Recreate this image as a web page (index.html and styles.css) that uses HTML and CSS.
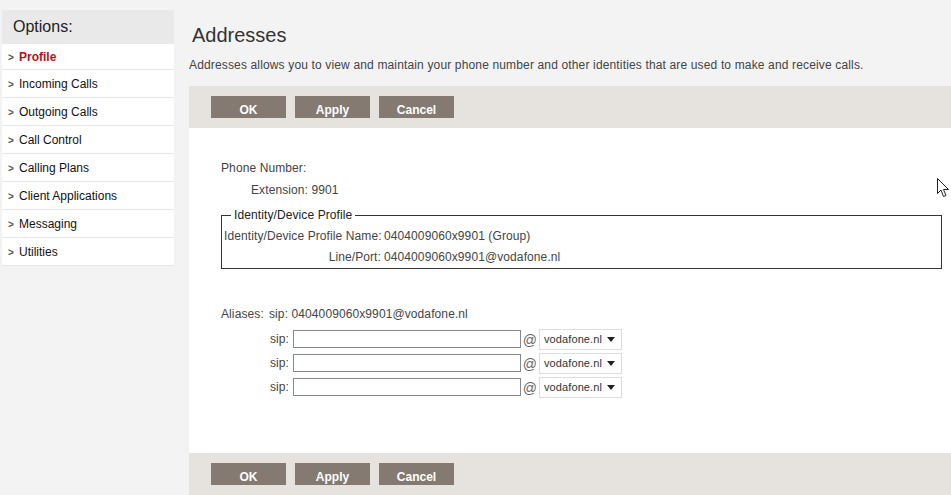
FILE: index.html
```html
<!DOCTYPE html>
<html lang="en">
  <head>
    <meta charset="UTF-8" />
    <meta name="viewport" content="width=device-width, initial-scale=1.0" />
    <title>Addresses</title>
    <link rel="stylesheet" href="styles.css">
  </head>
  <body>
    <div class="page">
      <div class="sidebar">
        <div class="sidebar-head">Options:</div>
        <a class="nav-item active" href="#"><span class="chev">&gt;</span>Profile</a>
        <a class="nav-item" href="#"><span class="chev">&gt;</span>Incoming Calls</a>
        <a class="nav-item" href="#"><span class="chev">&gt;</span>Outgoing Calls</a>
        <a class="nav-item" href="#"><span class="chev">&gt;</span>Call Control</a>
        <a class="nav-item" href="#"><span class="chev">&gt;</span>Calling Plans</a>
        <a class="nav-item" href="#"><span class="chev">&gt;</span>Client Applications</a>
        <a class="nav-item" href="#"><span class="chev">&gt;</span>Messaging</a>
        <a class="nav-item" href="#"><span class="chev">&gt;</span>Utilities</a>
      </div>

      <div class="main">
        <h1>Addresses</h1>
        <p class="intro">Addresses allows you to view and maintain your phone number and other identities that are used to make and receive calls.</p>

        <div class="button-bar">
          <button class="btn">OK</button>
          <button class="btn">Apply</button>
          <button class="btn">Cancel</button>
        </div>

        <div class="content">
          <div class="line">Phone Number:</div>
          <div class="line indent">Extension: 9901</div>

          <fieldset class="identity">
            <legend>Identity/Device Profile</legend>
            <div class="id-row">
              <span class="id-label">Identity/Device Profile Name:</span>
              <span>0404009060x9901 (Group)</span>
            </div>
            <div class="id-row">
              <span class="id-label">Line/Port:</span>
              <span>0404009060x9901@vodafone.nl</span>
            </div>
          </fieldset>

          <div class="aliases">
            <div class="alias-row">
              <span class="alias-title">Aliases:</span>
              <span>sip: 0404009060x9901@vodafone.nl</span>
            </div>
            <div class="alias-row">
              <span class="sip">sip:</span>
              <input type="text" class="sip-input" />
              <span class="at">@</span>
              <div class="select"><span>vodafone.nl</span><svg width="8" height="5" viewBox="0 0 8 5"><path d="M0 0h8L4 5z" fill="#222"/></svg></div>
            </div>
            <div class="alias-row">
              <span class="sip">sip:</span>
              <input type="text" class="sip-input" />
              <span class="at">@</span>
              <div class="select"><span>vodafone.nl</span><svg width="8" height="5" viewBox="0 0 8 5"><path d="M0 0h8L4 5z" fill="#222"/></svg></div>
            </div>
            <div class="alias-row">
              <span class="sip">sip:</span>
              <input type="text" class="sip-input" />
              <span class="at">@</span>
              <div class="select"><span>vodafone.nl</span><svg width="8" height="5" viewBox="0 0 8 5"><path d="M0 0h8L4 5z" fill="#222"/></svg></div>
            </div>
          </div>
        </div>

        <div class="button-bar">
          <button class="btn">OK</button>
          <button class="btn">Apply</button>
          <button class="btn">Cancel</button>
        </div>
      </div>
    </div>

    <!-- mouse pointer left in the screenshot -->
    <svg class="cursor" width="13" height="20" viewBox="0 0 13 20">
      <path d="M0.5 0.5 L0.5 15.5 L4 12 L6.5 18.5 L9 17.5 L6.5 11.5 L11.5 11.5 Z" fill="#fff" stroke="#222" stroke-width="1" stroke-linejoin="round"/>
    </svg>
  </body>
</html>
```

FILE: styles.css
```css
body {
  margin: 0;
  font-family: "Liberation Sans", Arial, sans-serif;
  font-size: 12px;
  background-color: #f3f3f4;
  color: #444;
  overflow: hidden;
}
.page {
  display: flex;
  align-items: flex-start;
}
.sidebar {
  width: 172px;
  margin: 10px 0 0 2px;
  background-color: #fff;
}
.sidebar-head {
  height: 34px;
  line-height: 34px;
  padding-left: 11px;
  font-size: 16px;
  color: #222;
  background-color: #e9e9e9;
}
.nav-item {
  display: block;
  height: 27px;
  line-height: 28px;
  border-bottom: 1px solid #e6e6e6;
  color: #111;
  text-decoration: none;
  font-size: 12px;
}
.nav-item.active {
  height: 25px;
  line-height: 27px;
  color: #b3121d;
  font-weight: bold;
}
.chev {
  display: inline-block;
  width: 17px;
  padding-left: 6px;
  box-sizing: border-box;
  color: #555;
  font-weight: bold;
  font-size: 10px;
}
.main {
  flex: 1;
  margin-left: 15px;
}
h1 {
  margin: 23px 0 0 3px;
  font-size: 20px;
  font-weight: normal;
  line-height: 24px;
  color: #333;
}
.intro {
  margin: 10px 0 13px 0;
  line-height: 16px;
  letter-spacing: 0.15px;
  color: #444;
}
.button-bar {
  display: flex;
  gap: 9px;
  height: 42px;
  padding: 10px 22px;
  box-sizing: border-box;
  background-color: #e6e2dd;
}
.btn {
  width: 75px;
  height: 22px;
  padding: 6px 0 0 0;
  border: none;
  background-color: #857a72;
  color: #fff;
  font-family: "Liberation Sans", Arial, sans-serif;
  font-size: 12px;
  font-weight: bold;
  line-height: 16px;
}
.content {
  height: 325px;
  box-sizing: border-box;
  padding: 32px 9px 0 32px;
  background-color: #fff;
  letter-spacing: 0.1px;
}
.line {
  height: 22px;
  line-height: 16px;
}
.indent {
  padding-left: 30px;
}
.identity {
  margin: 4px 0 0 0;
  padding: 6px 0 3px 2px;
  border: 1px solid #333;
}
.identity legend {
  padding: 0 3px;
  margin-left: 7px;
  color: #222;
}
.id-row {
  display: flex;
  gap: 3px;
  height: 21px;
  line-height: 16px;
  white-space: nowrap;
}
.id-row:last-child {
  height: 16px;
}
.id-label {
  width: 157px;
  text-align: right;
}
.aliases {
  margin-top: 34px;
}
.alias-row {
  display: flex;
  align-items: center;
  height: 24px;
}
.alias-row:first-child {
  height: 22px;
  margin-bottom: 2px;
}
.alias-title {
  width: 48px;
}
.sip {
  width: 72px;
  padding-right: 4px;
  box-sizing: border-box;
  text-align: right;
}
.sip-input {
  width: 228px;
  height: 18px;
  box-sizing: border-box;
  margin: 0;
  border: 1px solid #888;
}
.at {
  width: 18px;
  text-align: center;
  font-size: 14px;
  color: #666;
  padding-top: 2px;
}
.select {
  display: flex;
  align-items: center;
  justify-content: space-between;
  width: 83px;
  height: 21px;
  box-sizing: border-box;
  padding: 0 6px 0 4px;
  border: 1px solid #ddd;
  font-size: 11px;
  color: #333;
  background-color: #fff;
}
.cursor {
  position: absolute;
  left: 937px;
  top: 178px;
}
```
